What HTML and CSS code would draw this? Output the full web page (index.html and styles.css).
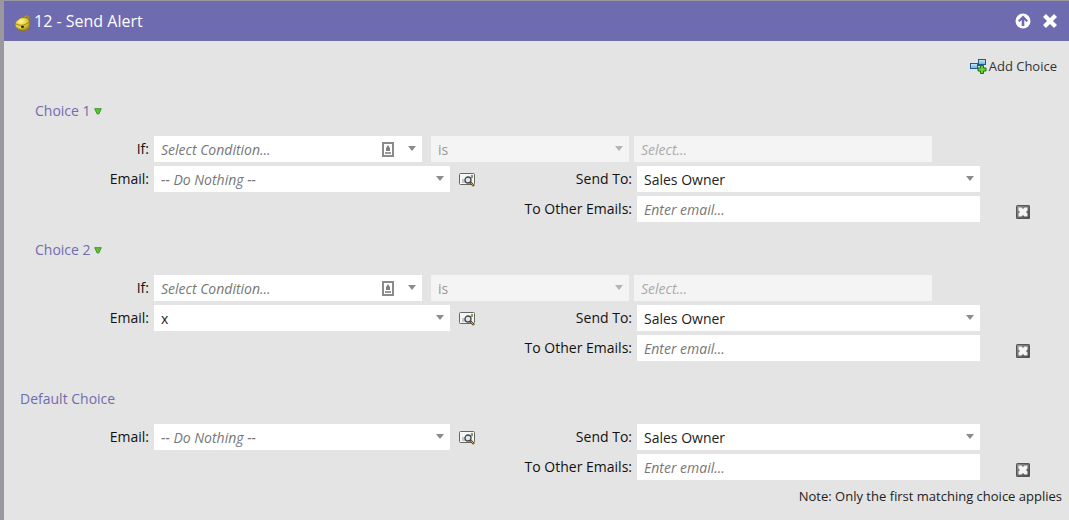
FILE: index.html
```html
<!DOCTYPE html>
<html lang="en">
<head>
    <meta charset="UTF-8">
    <meta name="viewport" content="width=device-width, initial-scale=1.0">
    <title>Send Alert</title>
    <link rel="stylesheet" href="styles.css">
</head>
<body>
    <!-- shared icons -->
    <svg class="icon-defs" width="0" height="0" aria-hidden="true">
        <defs>
            <linearGradient id="dark" x1="0" y1="0" x2="1" y2="1">
                <stop offset="0" stop-color="#999"/>
                <stop offset="1" stop-color="#444"/>
            </linearGradient>
            <radialGradient id="gold" cx=".4" cy=".3" r=".8">
                <stop offset="0" stop-color="#fff68c"/>
                <stop offset=".5" stop-color="#e2cc38"/>
                <stop offset="1" stop-color="#8a7616"/>
            </radialGradient>
            <linearGradient id="sky" x1="0" y1="0" x2="0" y2="1">
                <stop offset="0" stop-color="#d4ecf8"/>
                <stop offset="1" stop-color="#69aedb"/>
            </linearGradient>
        </defs>
        <symbol id="icon-preview" viewBox="0 0 16 14">
            <rect x=".5" y=".5" width="15" height="11" rx="1" fill="#f6f6f6" stroke="#666"/>
            <path d="M3 7h3M3 9h3" stroke="#999"/>
            <rect x="12" y="2" width="2" height="3" fill="#8a9a50"/>
            <circle cx="9" cy="7" r="3" fill="#dceaf5" stroke="#444" stroke-width="1.3"/>
            <path d="M11.5 9.5l3.5 3.5" stroke="#5c4a1c" stroke-width="2.4"/>
            <path d="M12 10l2.5 2.5" stroke="#d9a83a" stroke-width="1"/>
        </symbol>
        <symbol id="icon-remove" viewBox="0 0 14 14">
            <rect width="14" height="14" rx="1.5" fill="url(#dark)"/>
            <rect x=".5" y=".5" width="13" height="13" rx="1" fill="none" stroke="#555"/>
            <path d="M2.500 2.500h3L7 4l1.500-1.500h3v3L10 7l1.500 1.500v3h-3L7 10l-1.500 1.500h-3v-3L4 7 2.500 5.500z" fill="#f4f4f4"/>
        </symbol>
        <symbol id="icon-menu" viewBox="0 0 8 7">
            <path d="M.7.7h6.600L4.800 6H3.200z" fill="#62bd3a" stroke="#3d9a28"/>
        </symbol>
        <symbol id="icon-card" viewBox="0 0 12 15">
            <rect x="1" y="1" width="10" height="13" fill="#fff" stroke="#8a8a8a" stroke-width="2"/>
            <path d="M6 3l2 3v3H4V6z" fill="#808080"/>
            <path d="M3 11h6" stroke="#999" stroke-width="2"/>
        </symbol>
    </svg>

    <div class="panel">
        <header class="panel-header">
            <svg class="bell" width="17" height="17" viewBox="0 0 17 17">
                <circle cx="12.500" cy="2.800" r="1.800" fill="none" stroke="#a8931c" stroke-width="1.500"/>
                <path d="M4.500 4.500C7.500 1.500 13 2 15 5c1.500 3 1 7-1 9.500-3 2-8 1.500-11-1C0 11 .5 7 4.500 4.500z" fill="url(#gold)" stroke="#85711a" stroke-width=".7"/>
                <path d="M1.500 8.500c3 2.500 9 2.500 13.500-1.500" fill="none" stroke="#93801c" stroke-width=".9"/>
                <path d="M2.500 10.500c1.500 1.500 3 2 4.500 2.200" fill="none" stroke="#f5e77a"/>
                <ellipse cx="8.500" cy="11.800" rx="1.600" ry="1.100" fill="#2b2406"/>
            </svg>
            <h1>12 - Send Alert</h1>
            <button type="button" class="icon-button" aria-label="Collapse">
                <svg width="16" height="16" viewBox="0 0 16 16">
                    <circle cx="8" cy="8" r="7.500" fill="#fff"/>
                    <path d="M8 2.500l5 5-1.500 1.500-2.200-2V13H6.700V7L4.500 9 3 7.500z" fill="#6f6bb0"/>
                </svg>
            </button>
            <button type="button" class="icon-button" aria-label="Close">
                <svg width="14" height="14" viewBox="0 0 14 14">
                    <path d="M1.500 1.500l11 11M12.500 1.500l-11 11" stroke="#fff" stroke-width="4.200"/>
                </svg>
            </button>
        </header>

        <div class="toolbar">
            <button type="button" class="add-choice">
                <svg width="17" height="15" viewBox="0 0 17 15">
                    <path d="M6 6.500h5" stroke="#1f4f7d"/>
                    <rect x=".5" y="4.500" width="7" height="5" fill="url(#sky)" stroke="#1f5c8d"/>
                    <rect x="8.500" y=".5" width="7" height="5" fill="url(#sky)" stroke="#1f5c8d"/>
                    <path d="M10.500 6.500h3v2.500h2.500v3h-2.500v2.500h-3v-2.500h-2.500v-3h2.500z" fill="#6bd23c" stroke="#1d6e1a"/>
                </svg>
                Add Choice
            </button>
        </div>

        <form>
            <section class="choice">
                <h2>Choice 1 <button type="button" class="icon-button" aria-label="Choice 1 menu"><svg width="8" height="7"><use href="#icon-menu"/></svg></button></h2>
                <div class="row">
                    <label class="name" for="if-1">If:</label>
                    <div class="combo condition">
                        <select id="if-1" class="empty"><option>Select Condition...</option></select>
                        <svg class="card" width="12" height="15"><use href="#icon-card"/></svg>
                    </div>
                    <div class="combo operator"><select aria-label="Operator" disabled><option>is</option></select></div>
                    <div class="value"><input type="text" aria-label="Value" placeholder="Select..." disabled></div>
                </div>
                <div class="row">
                    <label class="name" for="email-1">Email:</label>
                    <div class="combo email"><select id="email-1" class="empty"><option>-- Do Nothing --</option></select></div>
                    <button type="button" class="icon-button preview" aria-label="Preview email"><svg width="16" height="14"><use href="#icon-preview"/></svg></button>
                    <label class="target" for="send-1">Send To:</label>
                    <div class="combo send"><select id="send-1"><option>Sales Owner</option></select></div>
                    <span class="end"></span>
                </div>
                <div class="row">
                    <span class="name"></span>
                    <span class="email"></span>
                    <span class="preview"></span>
                    <label class="target" for="other-1">To Other Emails:</label>
                    <div class="send"><input id="other-1" type="text" placeholder="Enter email..."></div>
                    <span class="end"><button type="button" class="icon-button" aria-label="Remove"><svg width="14" height="14"><use href="#icon-remove"/></svg></button></span>
                </div>
            </section>

            <section class="choice">
                <h2>Choice 2 <button type="button" class="icon-button" aria-label="Choice 2 menu"><svg width="8" height="7"><use href="#icon-menu"/></svg></button></h2>
                <div class="row">
                    <label class="name" for="if-2">If:</label>
                    <div class="combo condition">
                        <select id="if-2" class="empty"><option>Select Condition...</option></select>
                        <svg class="card" width="12" height="15"><use href="#icon-card"/></svg>
                    </div>
                    <div class="combo operator"><select aria-label="Operator" disabled><option>is</option></select></div>
                    <div class="value"><input type="text" aria-label="Value" placeholder="Select..." disabled></div>
                </div>
                <div class="row">
                    <label class="name" for="email-2">Email:</label>
                    <div class="combo email"><select id="email-2"><option>x</option></select></div>
                    <button type="button" class="icon-button preview" aria-label="Preview email"><svg width="16" height="14"><use href="#icon-preview"/></svg></button>
                    <label class="target" for="send-2">Send To:</label>
                    <div class="combo send"><select id="send-2"><option>Sales Owner</option></select></div>
                    <span class="end"></span>
                </div>
                <div class="row">
                    <span class="name"></span>
                    <span class="email"></span>
                    <span class="preview"></span>
                    <label class="target" for="other-2">To Other Emails:</label>
                    <div class="send"><input id="other-2" type="text" placeholder="Enter email..."></div>
                    <span class="end"><button type="button" class="icon-button" aria-label="Remove"><svg width="14" height="14"><use href="#icon-remove"/></svg></button></span>
                </div>
            </section>

            <section class="choice default">
                <h2>Default Choice</h2>
                <div class="row">
                    <label class="name" for="email-3">Email:</label>
                    <div class="combo email"><select id="email-3" class="empty"><option>-- Do Nothing --</option></select></div>
                    <button type="button" class="icon-button preview" aria-label="Preview email"><svg width="16" height="14"><use href="#icon-preview"/></svg></button>
                    <label class="target" for="send-3">Send To:</label>
                    <div class="combo send"><select id="send-3"><option>Sales Owner</option></select></div>
                    <span class="end"></span>
                </div>
                <div class="row">
                    <span class="name"></span>
                    <span class="email"></span>
                    <span class="preview"></span>
                    <label class="target" for="other-3">To Other Emails:</label>
                    <div class="send"><input id="other-3" type="text" placeholder="Enter email..."></div>
                    <span class="end"><button type="button" class="icon-button" aria-label="Remove"><svg width="14" height="14"><use href="#icon-remove"/></svg></button></span>
                </div>
            </section>
        </form>

        <p class="note">Note: Only the first matching choice applies</p>
    </div>
</body>
</html>
```
FILE: styles.css
```css
* {
    box-sizing: border-box;
}
body {
    margin: 0;
    background: #e4e4e4;
    color: #111;
    font-family: "Open Sans", sans-serif;
    font-size: 14px;
    line-height: 20px;
}
.icon-defs {
    position: absolute;
}
svg {
    display: block;
}
.panel {
    min-height: 100vh;
    border-top: 1px solid #9a979f;
    border-left: 4px solid #9a979f;
}
.panel-header {
    display: flex;
    align-items: center;
    height: 40px;
    padding: 0 12px 0 10px;
    background: #6f6bb0;
    color: #fff;
}
.panel-header h1 {
    flex: 1;
    margin: 0 0 0 3px;
    font-size: 16px;
    font-weight: normal;
}
.panel-header .icon-button {
    margin-left: 12px;
}
.bell {
    margin-top: 4px;
}
.icon-button {
    padding: 0;
    border: 0;
    background: none;
    cursor: pointer;
}
.toolbar {
    display: flex;
    justify-content: flex-end;
    padding: 15px 12px 0 0;
}
.add-choice {
    display: flex;
    align-items: center;
    gap: 2px;
    padding: 0;
    border: 0;
    background: none;
    color: #333;
    font: 13px/20px "Open Sans", sans-serif;
    cursor: pointer;
}

/* choices */
.choice {
    margin: 25px 0 0;
}
.choice + .choice {
    margin-top: 18px;
}
.choice h2 {
    display: flex;
    align-items: center;
    gap: 3px;
    margin: 0 0 15px 31px;
    color: #716cae;
    font-size: 14px;
    font-weight: normal;
}
.choice.default {
    margin-top: 28px;
}
.choice.default h2 {
    margin-left: 16px;
}
.row {
    display: flex;
    align-items: center;
    height: 26px;
    margin-bottom: 4px;
}
.name,
.target {
    flex: none;
    padding-right: 5px;
    text-align: right;
}
.name {
    width: 150px;
}
.target {
    width: 162px;
}
.condition {
    flex: 268 1 0;
    margin-right: 9px;
}
.operator {
    flex: 198 1 0;
    margin-right: 5px;
}
.value {
    flex: 298 1 0;
    margin-right: 137px;
}
.email {
    flex: 296 1 0;
}
.preview {
    flex: none;
    width: 16px;
    margin: 2px 0 0 9px;
}
.send {
    flex: 343 1 0;
}
.end {
    flex: none;
    width: 89px;
    padding: 6px 0 0 36px;
}
.end .icon-button {
    display: block;
}

/* fields */
input,
select {
    display: block;
    width: 100%;
    height: 26px;
    padding: 1px 7px 0;
    border: 0;
    border-radius: 0;
    background: #fff;
    color: #222;
    font: 14px/20px "Open Sans", sans-serif;
    appearance: none;
}
.combo {
    position: relative;
}
.combo::after {
    content: "";
    position: absolute;
    top: 10px;
    right: 6px;
    border: 4px solid transparent;
    border-top: 5px solid #8c8c8c;
    border-bottom: 0;
    pointer-events: none;
}
.combo .card {
    position: absolute;
    top: 6px;
    right: 28px;
    pointer-events: none;
}
.empty,
::placeholder {
    color: #777;
    font-style: italic;
}
input:disabled,
select:disabled {
    background: #f4f4f4;
    color: #999;
    opacity: 1;
}
input:disabled::placeholder {
    color: #aaa;
}
.operator::after {
    border-top-color: #b4b4b4;
}
.note {
    margin: 6px 7px 0;
    color: #222;
    font-size: 13px;
    text-align: right;
}
```
